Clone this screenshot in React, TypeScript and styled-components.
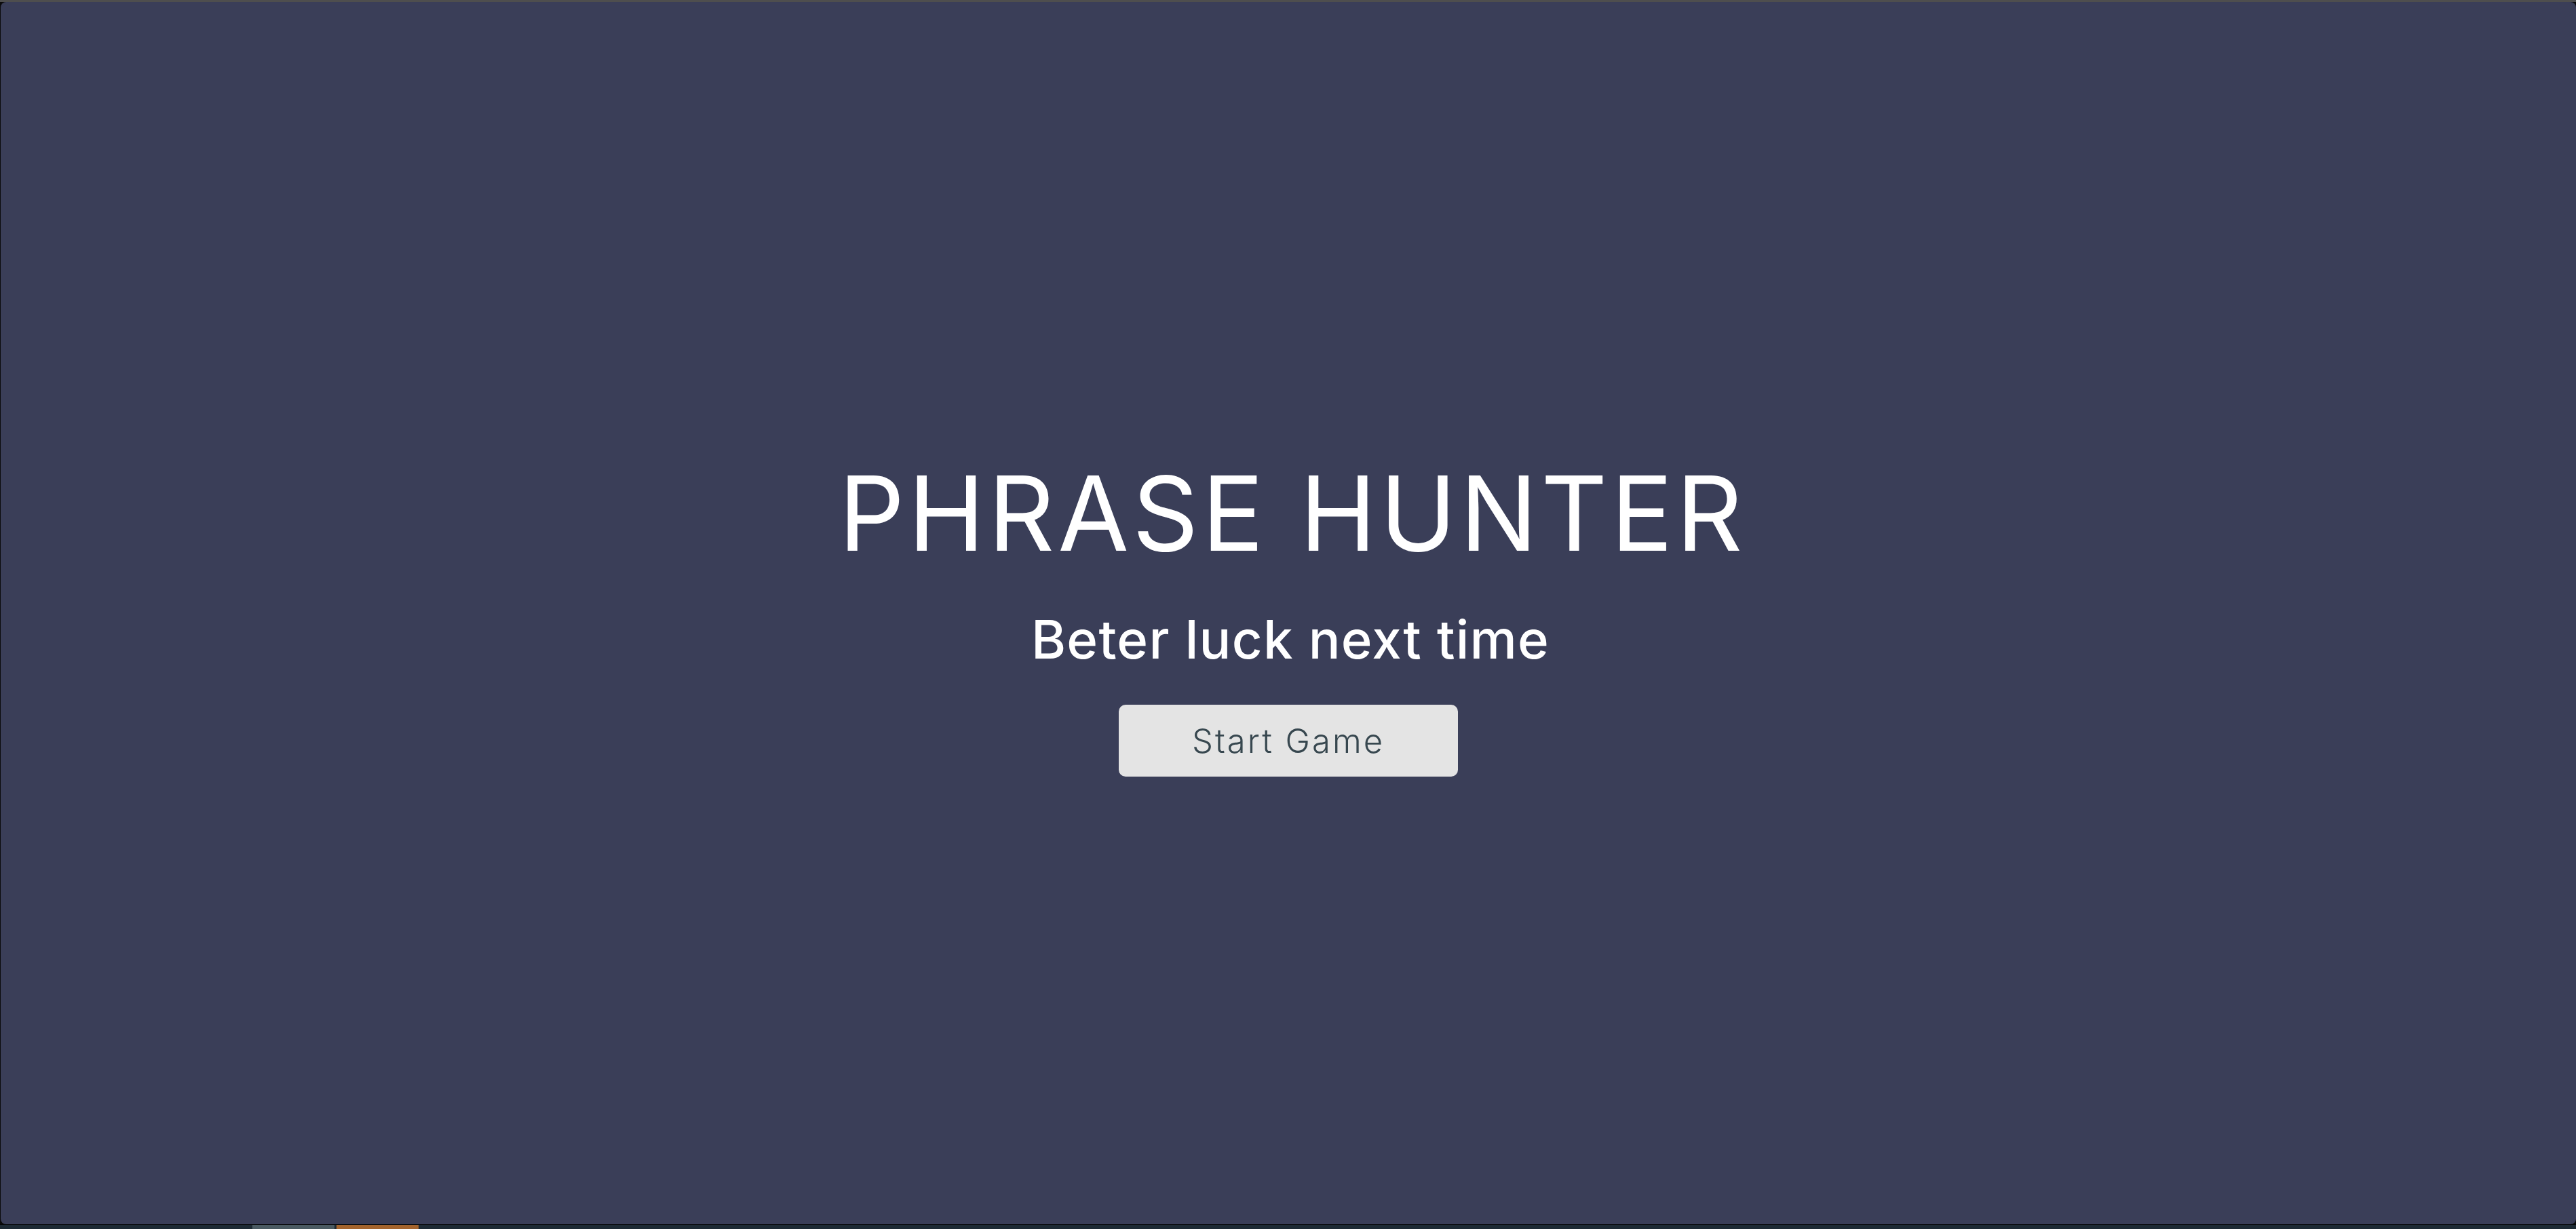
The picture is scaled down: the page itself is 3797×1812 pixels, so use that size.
import React from "react";
import styled, { createGlobalStyle } from "styled-components";

const Global = createGlobalStyle`
  html, body {
    margin: 0;
    padding: 0;
    background: #0b0b0c;
    height: 100%;
    overflow: hidden;
  }
  #root {
    height: 100%;
  }
  * { box-sizing: border-box; }
`;

const Frame = styled.div`
  display: flex;
  flex-direction: column;
  width: 3797px;
  height: 1812px;
  overflow: hidden;
`;

const TopStrip = styled.div`
  height: 3px;
  flex: none;
  background: #4e4e4e;
`;

const PanelRow = styled.div`
  display: flex;
  flex: none;
  height: 1802px;
  padding-left: 1px;
`;

const Panel = styled.main`
  flex: 1;
  background: #3a3e58;
  border-radius: 8px;
  display: flex;
  flex-direction: column;
  align-items: center;
  padding-top: 678px;
  font-family: Inter, "Open Sans", sans-serif;
`;

const Title = styled.h1`
  margin: 0 0 0 12px;
  font-size: 152px;
  line-height: 1;
  font-weight: 400;
  color: #ffffff;
  letter-spacing: 5px;
  white-space: nowrap;
`;

const Subtitle = styled.h2`
  margin: 71px 0 0 6px;
  font-size: 78px;
  line-height: 1;
  font-weight: 500;
  color: #ffffff;
  letter-spacing: 1.2px;
  white-space: nowrap;
`;

const StartButton = styled.button`
  margin-top: 57px;
  width: 500px;
  height: 106px;
  border: none;
  border-radius: 10px;
  background: #e4e4e4;
  color: #37474f;
  font-family: Inter, "Open Sans", sans-serif;
  font-size: 49px;
  font-weight: 300;
  letter-spacing: 3px;
  display: flex;
  align-items: center;
  justify-content: center;
  padding: 0;
  cursor: pointer;
`;

const Gap = styled.div`
  height: 1px;
  flex: none;
  background: #050607;
`;

const BottomBar = styled.div`
  flex: 1;
  display: flex;
  padding-left: 372px;
  gap: 3px;
  background: #1d2a34;
`;

const Segment = styled.div<{ $color: string }>`
  width: 121px;
  background: ${(p) => p.$color};
`;

export default function App() {
  return (
    <>
      <Global />
      <Frame>
        <TopStrip />
        <PanelRow>
          <Panel>
            <Title>PHRASE HUNTER</Title>
            <Subtitle>Beter luck next time</Subtitle>
            <StartButton>Start Game</StartButton>
          </Panel>
        </PanelRow>
        <Gap />
        <BottomBar>
          <Segment $color="#4a5a62" />
          <Segment $color="#a4642e" />
        </BottomBar>
      </Frame>
    </>
  );
}
